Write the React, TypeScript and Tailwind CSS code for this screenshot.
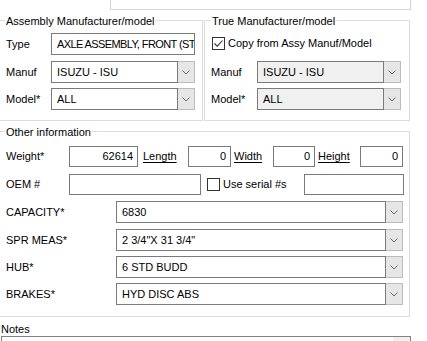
import React from "react";

function Chevron() {
  return (
    <svg width="8" height="5" viewBox="0 0 8 5" fill="none">
      <path d="M0.5 0.5 L4 4 L7.5 0.5" stroke="#6b6b6b" strokeWidth="1" />
    </svg>
  );
}

function Check({ checked }: { checked?: boolean }) {
  return (
    <div className="w-[13px] h-[13px] shrink-0 border border-[#333] bg-white flex items-center justify-center">
      {checked && (
        <svg width="11" height="11" viewBox="0 0 11 11" fill="none">
          <path d="M1.5 5.5 L4.2 8.2 L9.5 2.5" stroke="#333" strokeWidth="1.1" />
        </svg>
      )}
    </div>
  );
}

interface SelectProps {
  value: string;
  disabled?: boolean;
  className: string;
}

function Select({ value, disabled, className }: SelectProps) {
  return (
    <div className={`flex ${className}`}>
      <div
        className={`flex-1 min-w-0 flex items-center border border-[#7a7a7a] pl-[5px] overflow-hidden whitespace-nowrap ${
          disabled ? "bg-[#f0f0f0]" : "bg-white"
        }`}
      >
        {value}
      </div>
      <div className="w-[17px] shrink-0 flex items-center justify-center border-y border-r border-[#bcbcbc] bg-[#e6e6e6]">
        <Chevron />
      </div>
    </div>
  );
}

function Input({ value = "", className, right }: { value?: string; className: string; right?: boolean }) {
  return (
    <div
      className={`flex items-center border border-[#7a7a7a] bg-white overflow-hidden whitespace-nowrap ${
        right ? "justify-end pr-[4px]" : "pl-[5px]"
      } ${className}`}
    >
      {value}
    </div>
  );
}

function GroupTitle({ text, offset }: { text: string; offset: string }) {
  return <div className={`-mt-[6px] ${offset} px-[1px] w-fit bg-white`}>{text}</div>;
}

function Link({ text, className }: { text: string; className: string }) {
  return <span className={`underline underline-offset-2 text-black ${className}`}>{text}</span>;
}

const specRows = [
  { label: "CAPACITY*", value: "6830", mt: "mt-[6px]" },
  { label: "SPR MEAS*", value: "2 3/4\"X 31 3/4\"", mt: "mt-[6px]" },
  { label: "HUB*", value: "6 STD BUDD", mt: "mt-[5px]" },
  { label: "BRAKES*", value: "HYD DISC ABS", mt: "mt-[5px]" },
];

export default function App() {
  return (
    <div className="w-[427px] h-[341px] overflow-hidden bg-white text-black text-[11px] leading-[13px] font-['Liberation_Sans',Arial,sans-serif]">
      {/* bottom of the box above */}
      <div className="ml-[110px] w-[301px] h-[10px] border-x border-b border-[#d6d6d6]" />

      <div className="flex mt-[10px] -ml-px">
        {/* Assembly Manufacturer/model */}
        <div className="w-[204px] border border-[#dcdcdc] pb-[10px]">
          <GroupTitle text="Assembly Manufacturer/model" offset="ml-[5px]" />
          <div className="flex items-center h-[22px] mt-[5px] pl-[6px]">
            <span className="w-[45px]">Type</span>
            <Input value="AXLE ASSEMBLY, FRONT (ST" className="w-[144px] h-[22px] tracking-[-0.6px]" />
          </div>
          <div className="flex items-center h-[22px] mt-[6px] pl-[6px]">
            <span className="w-[45px]">Manuf</span>
            <Select value="ISUZU - ISU" className="w-[144px] h-[22px]" />
          </div>
          <div className="flex items-center h-[22px] mt-[5px] pl-[6px]">
            <span className="w-[45px]">Model*</span>
            <Select value="ALL" className="w-[144px] h-[22px]" />
          </div>
        </div>

        {/* True Manufacturer/model */}
        <div className="ml-px w-[206px] border border-[#dcdcdc] pb-[10px]">
          <GroupTitle text="True Manufacturer/model" offset="ml-[6px]" />
          <div className="flex items-center h-[13px] mt-[9px] pl-[7px] gap-[3px]">
            <Check checked />
            <span>Copy from Assy Manuf/Model</span>
          </div>
          <div className="flex items-center h-[22px] mt-[11px] pl-[6px]">
            <span className="w-[46px]">Manuf</span>
            <Select value="ISUZU - ISU" disabled className="w-[144px] h-[22px]" />
          </div>
          <div className="flex items-center h-[22px] mt-[5px] pl-[6px]">
            <span className="w-[46px]">Model*</span>
            <Select value="ALL" disabled className="w-[144px] h-[22px]" />
          </div>
        </div>
      </div>

      {/* Other information */}
      <div className="mt-[10px] -ml-px w-[411px] border border-[#dcdcdc] pb-[11px]">
        <GroupTitle text="Other information" offset="ml-[5px]" />
        <div className="flex items-center h-[21px] mt-[7px] pl-[6px]">
          <span className="w-[63px]">Weight*</span>
          <Input value="62614" right className="w-[69px] h-[21px]" />
          <Link text="Length" className="ml-[5px] w-[45px]" />
          <Input value="0" right className="w-[43px] h-[21px]" />
          <Link text="Width" className="ml-[3px] w-[39px]" />
          <Input value="0" right className="w-[42px] h-[21px]" />
          <Link text="Height" className="ml-[3px] w-[42px]" />
          <Input value="0" right className="w-[43px] h-[21px]" />
        </div>
        <div className="flex items-center h-[21px] mt-[7px] pl-[6px]">
          <span className="w-[63px]">OEM #</span>
          <Input className="w-[132px] h-[21px]" />
          <div className="ml-[6px]">
            <Check />
          </div>
          <span className="ml-[3px] w-[81px]">Use serial #s</span>
          <Input className="w-[100px] h-[21px]" />
        </div>
        {specRows.map((r) => (
          <div key={r.label} className={`flex items-center h-[22px] pl-[6px] ${r.mt}`}>
            <span className="w-[110px]">{r.label}</span>
            <Select value={r.value} className="w-[287px] h-[22px]" />
          </div>
        ))}
      </div>

      {/* Notes */}
      <div className="mt-[6px] pl-[1px]">Notes</div>
      <div className="ml-[1px] w-[410px] h-[40px] flex border border-[#828282]">
        <div className="flex-1" />
        <div className="w-[17px] bg-[#f0f0f0]" />
      </div>
    </div>
  );
}
